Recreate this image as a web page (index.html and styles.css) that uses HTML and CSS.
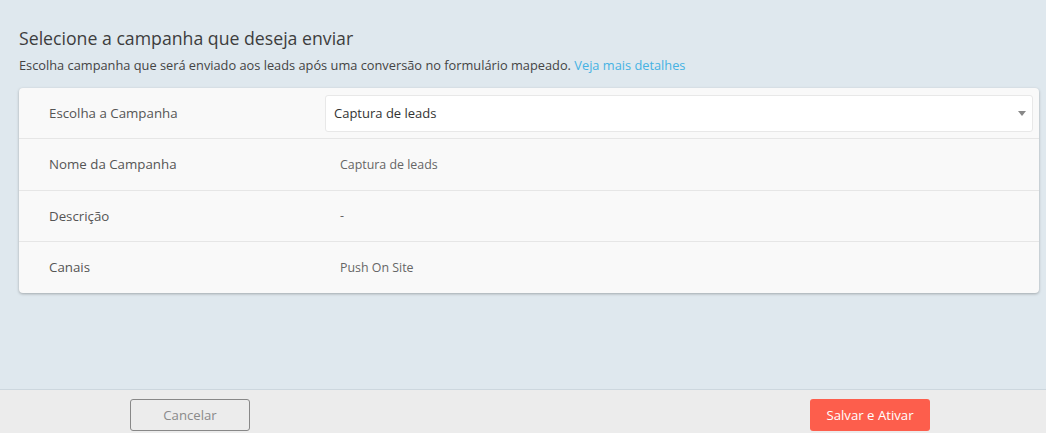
FILE: index.html
```html
<!DOCTYPE html>
<html lang="pt-BR">
<head>
<meta charset="utf-8">
<title>Selecione a campanha</title>
<link rel="stylesheet" href="styles.css">
</head>
<body>
<div class="page">
  <main class="main">
    <h1 class="title">Selecione a campanha que deseja enviar</h1>
    <p class="subtitle">Escolha campanha que será enviado aos leads após uma conversão no formulário mapeado. <a class="link" href="#">Veja mais detalhes</a></p>
    <section class="card">
      <div class="row row-select">
        <div class="label">Escolha a Campanha</div>
        <div class="value">
          <div class="select">
            <span class="select-text">Captura de leads</span>
            <span class="caret"></span>
          </div>
        </div>
      </div>
      <div class="row">
        <div class="label">Nome da Campanha</div>
        <div class="value text">Captura de leads</div>
      </div>
      <div class="row">
        <div class="label">Descrição</div>
        <div class="value text">-</div>
      </div>
      <div class="row">
        <div class="label">Canais</div>
        <div class="value text">Push On Site</div>
      </div>
    </section>
  </main>
  <footer class="footer">
    <button class="btn btn-cancel" type="button">Cancelar</button>
    <button class="btn btn-save" type="button">Salvar e Ativar</button>
  </footer>
</div>
</body>
</html>
```

FILE: styles.css
```css
* { box-sizing: border-box; }
html, body { margin: 0; padding: 0; }
body {
  background: #dfe8ee;
  font-family: "Open Sans", "Noto Sans", "DejaVu Sans", sans-serif;
  color: #555;
}
.page {
  display: flex;
  flex-direction: column;
  height: 100vh;
}
.main {
  flex: 1;
  padding: 26px 7px 0 19px;
}
.title {
  margin: 0;
  font-size: 17.7px;
  line-height: 24px;
  font-weight: 400;
  color: #3d3d3d;
}
.subtitle {
  margin: 6px 0 0;
  font-size: 12.8px;
  line-height: 18px;
  color: #444;
}
.link { color: #45b2e3; text-decoration: none; }
.card {
  margin-top: 14px;
  background: #f9f9f9;
  border-radius: 4px;
  box-shadow: 0 1px 3px rgba(0, 0, 0, 0.28);
}
.row {
  display: grid;
  grid-template-columns: 306px 1fr;
  align-items: center;
  height: 51.5px;
  border-top: 1px solid #e6e6e6;
  padding-right: 6px;
}
.row-select { border-top: 0; height: 50px; }
.label {
  padding-left: 30px;
  font-size: 13.3px;
  color: #555;
}
.value.text {
  padding-left: 15px;
  font-size: 12.4px;
  color: #666;
}
.select {
  height: 37px;
  display: flex;
  align-items: center;
  justify-content: space-between;
  background: #fff;
  border: 1px solid #e8e8e8;
  border-radius: 3px;
  padding: 0 6px 0 8px;
}
.select-text { font-size: 13px; color: #333; }
.caret {
  width: 0; height: 0;
  border-left: 4px solid transparent;
  border-right: 4px solid transparent;
  border-top: 5px solid #888;
  margin-top: 1px;
}
.footer {
  height: 44px;
  background: #ececec;
  border-top: 1px solid #cdd7de;
  display: flex;
  justify-content: space-between;
  align-items: flex-start;
  padding: 9px 116px 0 130px;
}
.btn {
  width: 120px;
  height: 32px;
  font-family: "Open Sans", "Noto Sans", sans-serif;
  font-size: 13.2px;
  border-radius: 3px;
  cursor: pointer;
}
.btn-cancel {
  background: transparent;
  border: 1px solid #888;
  color: #8a8a8a;
}
.btn-save {
  background: #fd5e4c;
  border: 0;
  color: #fff;
}
```
